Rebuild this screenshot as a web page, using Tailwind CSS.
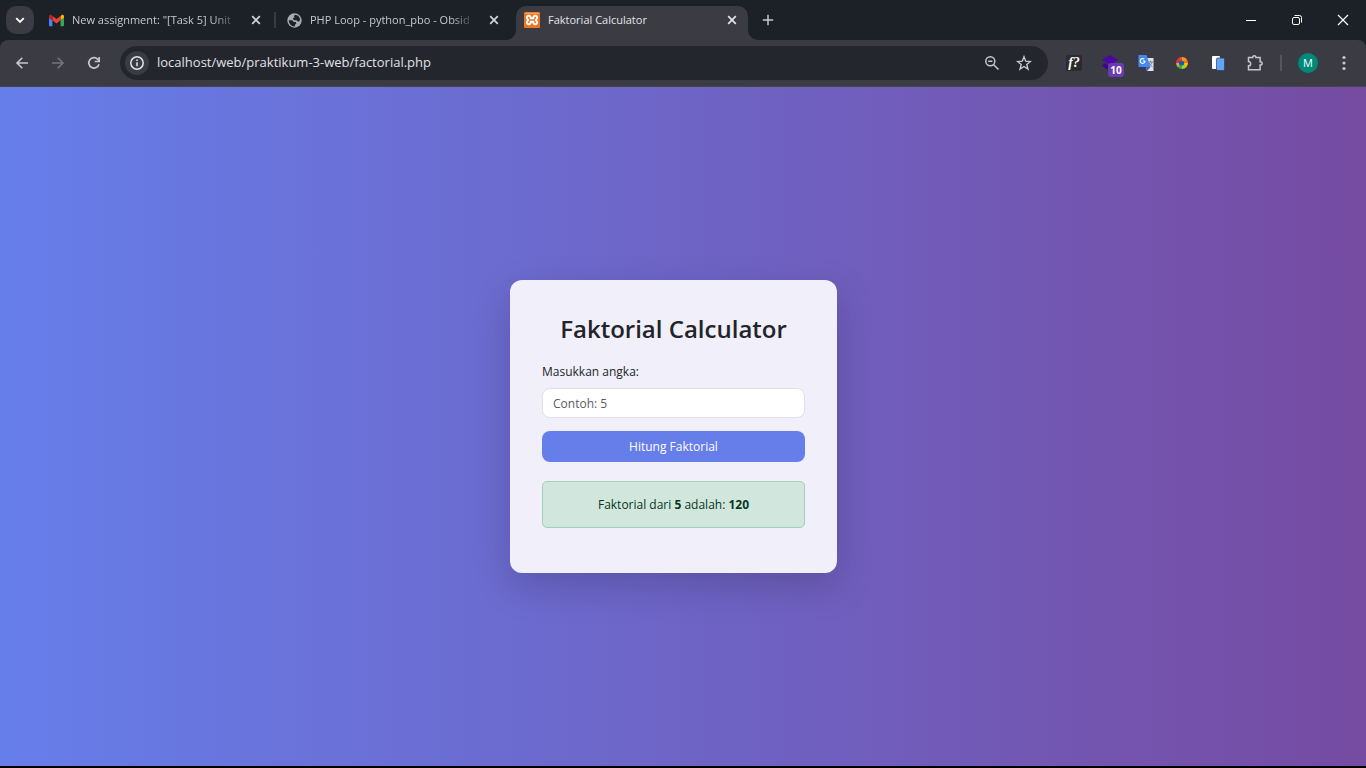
<!DOCTYPE html>
<html lang="id">
<head>
<meta charset="utf-8">
<meta name="viewport" content="width=device-width, initial-scale=1">
<title>Faktorial Calculator</title>
<script src="https://cdn.jsdelivr.net/npm/@tailwindcss/browser@4"></script>
</head>
<body class="flex h-screen flex-col overflow-hidden bg-black font-['Open_Sans','Noto_Sans',sans-serif] text-[#c7c8cd]">
<header class="shrink-0 bg-[#1c2027]">
  <div class="flex h-10 items-center">
    <button aria-label="Search tabs" class="ml-1.5 grid size-7 shrink-0 place-items-center rounded-[10px] bg-[#3a3b43] text-white">
      <svg class="size-3" viewBox="0 0 12 12" fill="none" stroke="currentColor" stroke-width="1.8"><path d="M2.2 4.2 6 8l3.800-3.800"/></svg>
    </button>
    <div role="tablist" class="flex h-full min-w-0 items-center">
      <div class="flex w-60 items-center pl-[15px]">
        <svg class="mr-2 size-[15px] shrink-0" viewBox="0 0 24 24"><path fill="#4285f4" d="M1.600 21H5.500V11.700L0 7.600V19.400C0 20.300.7 21 1.600 21z"/><path fill="#34a853" d="M18.500 21h3.900c.9 0 1.600-.7 1.600-1.600V7.600l-5.500 4.100z"/><path fill="#fbbc04" d="M18.500 4.700v7L24 7.600V5.400c0-2-2.300-3.200-3.900-2z"/><path fill="#ea4335" d="M5.500 11.700v-7L12 9.600l6.500-4.900v7L12 16.600z"/><path fill="#c5221f" d="M0 5.400v2.200l5.500 4.100v-7L3.900 3.400C2.300 2.200 0 3.400 0 5.400z"/></svg>
        <button role="tab" class="w-[166px] mask-r-from-85% text-left text-[11px] leading-4 whitespace-nowrap">New assignment: "[Task 5] Unit</button>
        <button aria-label="Close tab" class="ml-3 text-[#d5d6da]"><svg class="size-3" viewBox="0 0 12 12" stroke="currentColor" stroke-width="1.700"><path d="m2.200 2.200 7.600 7.600m0-7.600L2.200 9.800"/></svg></button>
      </div>
      <div class="flex h-4 w-[242px] items-center border-l-2 border-[#3a3b43] pl-[11px]">
        <svg class="mr-2 size-[15px] shrink-0" viewBox="0 0 24 24"><circle cx="12" cy="12" r="11.500" fill="#a9abb1"/><path fill="#1c2027" d="M12.500 2.800 18 4.500 21 9l-1 4-3 .5-1.500-2H12L9.500 10 10 7.500h2.500L11 5z"/><path fill="#1c2027" d="M2.800 11.500h5.700l2.500 3h3l1 2.500-2 1.500-.5 3C7 21.500 3 17 2.800 11.500z"/></svg>
        <button role="tab" class="w-[166px] mask-r-from-85% text-left text-[11px] leading-4 whitespace-nowrap">PHP Loop - python_pbo - Obsid</button>
        <button aria-label="Close tab" class="ml-3 text-[#d5d6da]"><svg class="size-3" viewBox="0 0 12 12" stroke="currentColor" stroke-width="1.700"><path d="m2.200 2.200 7.600 7.600m0-7.600L2.200 9.800"/></svg></button>
      </div>
      <div class="relative flex h-[34px] w-[232px] items-center self-end rounded-t-[10px] bg-[#3a3b43] px-2 pb-1.5 text-[#e4e5e8]">
        <svg class="absolute bottom-0 -left-2.5 size-2.5" viewBox="0 0 10 10" fill="#3a3b43"><path d="M10 0v10H0A10 10 0 0 0 10 0z"/></svg>
        <svg class="absolute -right-2.5 bottom-0 size-2.5" viewBox="0 0 10 10" fill="#3a3b43"><path d="M0 0v10h10A10 10 0 0 1 0 0z"/></svg>
        <svg class="mr-2 size-4 shrink-0" viewBox="0 0 16 16"><rect width="16" height="16" rx="1" fill="#ee7623"/><path d="M1.500 1.300h13" stroke="#f7bd92" stroke-width=".8"/><path d="M6.700 6.200C7 3 2.600 3 2.900 5.600c.1 1 .6 1.700 1.400 2.400-.8.700-1.300 1.400-1.400 2.400-.3 2.600 4.100 2.600 3.800-.6h2.600c-.3 3.200 4.100 3.200 3.800.6-.1-1-.6-1.700-1.400-2.400.8-.7 1.300-1.400 1.400-2.400.3-2.600-4.100-2.600-3.800.6z" fill="none" stroke="#fff" stroke-width="1.900" stroke-linejoin="round"/></svg>
        <button role="tab" aria-selected="true" class="flex-1 text-left text-[11px] leading-4 whitespace-nowrap">Faktorial Calculator</button>
        <button aria-label="Close tab" class="mr-0.5"><svg class="size-3" viewBox="0 0 12 12" stroke="currentColor" stroke-width="1.700"><path d="m2.200 2.200 7.600 7.600m0-7.600L2.200 9.800"/></svg></button>
      </div>
    </div>
    <button aria-label="New tab" class="ml-3.5"><svg class="size-3" viewBox="0 0 12 12" stroke="currentColor" stroke-width="1.500"><path d="M6 .8v10.400M.8 6h10.400"/></svg></button>
    <div class="ml-auto flex text-white">
      <button aria-label="Minimize" class="grid h-10 w-[46px] place-items-center"><svg class="size-3" viewBox="0 0 12 12" stroke="currentColor"><path d="M1 6.500h10"/></svg></button>
      <button aria-label="Restore" class="grid h-10 w-[46px] place-items-center"><svg class="size-3" viewBox="0 0 12 12" fill="none" stroke="currentColor"><rect x="1.500" y="3.500" width="7" height="7" rx="1.500"/><path d="M3.500 1.500h5a2 2 0 0 1 2 2v5"/></svg></button>
      <button aria-label="Close" class="grid h-10 w-[46px] place-items-center"><svg class="size-3" viewBox="0 0 12 12" stroke="currentColor" stroke-width="1.200"><path d="m1 1 10 10M11 1 1 11"/></svg></button>
    </div>
  </div>
  <div class="flex h-[47px] items-center rounded-t-lg border-b border-[#45454a] bg-[#3a3b43] pr-3.5">
    <div class="flex w-30 shrink-0 items-center gap-5 pl-3.5">
      <button aria-label="Back"><svg class="size-4" viewBox="0 0 16 16" fill="none" stroke="currentColor" stroke-width="1.600"><path d="M14 8H3m5.300-5.300L3 8l5.300 5.300"/></svg></button>
      <button aria-label="Forward" class="text-[#75767c]"><svg class="size-4" viewBox="0 0 16 16" fill="none" stroke="currentColor" stroke-width="1.600"><path d="M2 8h11M7.700 2.700 13 8l-5.300 5.300"/></svg></button>
      <button aria-label="Reload"><svg class="size-4" viewBox="0 0 16 16" fill="none" stroke="currentColor" stroke-width="1.700"><path d="M13 9.200A5.200 5.200 0 1 1 11.800 4.300L13 5.700"/><path d="M13.200 2v4.500H8.700"/></svg></button>
    </div>
    <div class="flex h-[34px] flex-1 items-center rounded-full bg-[#24262e] pr-4 pl-[5px]">
      <button aria-label="View site information" class="grid size-6 shrink-0 place-items-center rounded-full bg-[#3a3b43] text-[#e4e5e8]"><svg class="size-4" viewBox="0 0 16 16" fill="none" stroke="currentColor" stroke-width="1.500"><circle cx="8" cy="8" r="6.200"/><path d="M8 7.300v4M8 4.600v1.500"/></svg></button>
      <input aria-label="Address" value="localhost/web/praktikum-3-web/factorial.php" class="ml-2 min-w-0 flex-1 bg-transparent text-[13px] text-[#e0e1e5] outline-none">
      <button aria-label="Zoom"><svg class="size-4" viewBox="0 0 16 16" fill="none" stroke="currentColor" stroke-width="1.500"><circle cx="6.300" cy="6.300" r="4.500"/><path d="m9.700 9.700 4.800 4.800M4.200 6.300h4.200"/></svg></button>
      <button aria-label="Bookmark this tab" class="ml-4"><svg class="size-4" viewBox="0 0 16 16" fill="none" stroke="currentColor" stroke-width="1.400"><path d="m8 1.800 1.700 4.400 4.700.3-3.600 3 1.200 4.600-4-2.600-4 2.600 1.200-4.600-3.600-3 4.700-.3z"/></svg></button>
    </div>
    <div class="flex shrink-0 items-center pl-[18px]">
      <button aria-label="Font finder" class="size-4 rounded-xs bg-[#2c2b2c] font-['Liberation_Serif',serif] text-sm leading-4 font-bold text-white italic">f?</button>
      <button aria-label="Extension with 10 items" class="relative ml-5 size-4">
        <svg class="size-4" viewBox="0 0 16 16"><path fill="#4b08a8" d="M8 0 16 5 8 10 0 5z"/><path fill="#3c078b" d="m2 8 6 3 5-3 1 3-6 5-8-5z"/></svg>
        <span class="absolute top-2 left-1.5 flex h-[14px] w-4 items-center justify-center rounded-[3px] bg-[#6a3ab2] text-[10px] font-bold text-white">10</span>
      </button>
      <button aria-label="Google Translate" class="ml-5"><svg class="size-4" viewBox="0 0 16 16"><path fill="#dfe1e4" d="M6 3h9.500v13H9z"/><path fill="#4688f1" d="M.5 0h8l4 12H.5z"/><path fill="#2b65c9" d="M8 12h4.500L9 16z"/><path d="M7 6H4.800m2.200 0A2.400 2.400 0 1 1 6.200 4.200" stroke="#fff" fill="none" stroke-width="1.100"/><path d="M10.500 7h4.500M12.500 5.800V7m1.500 0c-.5 2-1.800 3.500-3 4.300M11.300 8c.8 1.800 1.800 2.800 3.200 3.700" stroke="#708087" fill="none"/></svg></button>
      <button aria-label="Colour picker" class="ml-5"><svg class="size-4" viewBox="0 0 16 16"><path fill="#e02d4a" d="M8 8H2a6 6 0 0 1 3-5.200z"/><path fill="#f2452f" d="M8 8 4.500 3.100A6 6 0 0 1 9 2.100z"/><path fill="#ff9d00" d="M8 8V2a6 6 0 0 1 5.200 3z"/><path fill="#fb722b" d="m8 8 4.500-4A6 6 0 0 1 14 8z"/><path fill="#ffc400" d="M8 8h6a6 6 0 0 1-1.800 4.200z"/><path fill="#a2d823" d="m8 8 4.600 3.900A6 6 0 0 1 8 14z"/><path fill="#20bd55" d="M8 8v6a6 6 0 0 1-4.600-2.200z"/><path fill="#d5ad12" d="m8 8-4.200 4.200A6 6 0 0 1 2 8z"/><circle cx="7.600" cy="8" r="2.600" fill="#185bad"/></svg></button>
      <button aria-label="Copy extension" class="ml-5"><svg class="size-4" viewBox="0 0 16 16"><rect x="2" y="1" width="8" height="13" rx="1" fill="#fff"/><rect x="6.500" y="3" width="8" height="12.500" rx="1.200" fill="#60a5fa" stroke="#3a3b43" stroke-width=".7"/></svg></button>
      <button aria-label="Extensions" class="ml-5"><svg class="size-[18px]" viewBox="0 0 18 18" fill="none" stroke="currentColor" stroke-width="1.500"><path d="M2.500 3.500h4.200c0-2.500 3.200-2.500 3.200 0h4.200v4.200c2.700 0 2.700 3.400 0 3.400v4.700H2.500v-4c2.900 0 2.900-4.200 0-4.200z"/></svg></button>
      <span class="ml-4 h-4 w-0.5 bg-[#55565d]"></span>
      <button aria-label="Profile M" class="ml-4 grid size-5 place-items-center rounded-full bg-[#00897b] text-[11px] text-white">M</button>
      <button aria-label="Menu" class="ml-[18px]"><svg class="size-4" viewBox="0 0 16 16" fill="currentColor"><circle cx="8" cy="2.500" r="1.600"/><circle cx="8" cy="8" r="1.600"/><circle cx="8" cy="13.500" r="1.600"/></svg></button>
    </div>
  </div>
</header>
<main class="mb-0.5 flex flex-1 items-center justify-center bg-[linear-gradient(90deg,#667eea,#764ba2)] pr-[19px]">
  <form class="w-[327px] rounded-xl bg-[#f1effa] px-8 pt-8 pb-[45px] text-xs leading-5 text-[#212529] shadow-[0_13px_38px_rgba(0,0,0,0.175)]" onsubmit="return false">
    <h1 class="mb-4 text-center text-2xl leading-[34px] font-semibold whitespace-nowrap">Faktorial Calculator</h1>
    <label for="angka" class="mb-1.5 block">Masukkan angka:</label>
    <input id="angka" inputmode="numeric" placeholder="Contoh: 5" class="block h-[30px] w-full rounded-lg border border-[#dee2e6] bg-white px-2.5 placeholder:text-[#595c5f]">
    <button class="mt-[13px] h-[31px] w-full rounded-lg bg-[#667eea] text-white">Hitung Faktorial</button>
    <p role="status" class="mt-[19px] rounded-[5px] border border-[#a3cfbb] bg-[#d1e7dd] py-3 text-center leading-[21px] text-[#0a3622]">Faktorial dari <strong>5</strong> adalah: <strong>120</strong></p>
  </form>
</main>
</body>
</html>
